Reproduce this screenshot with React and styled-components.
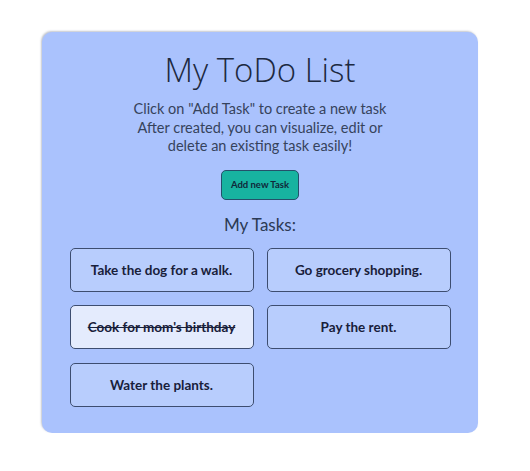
import React from "react";
import styled, { createGlobalStyle } from "styled-components";

const GlobalStyle = createGlobalStyle`
  body {
    margin: 0;
    background: #ffffff;
    font-family: Lato, "Open Sans", sans-serif;
  }
`;

const tasks = [
  { id: 1, text: "Take the dog for a walk.", done: false },
  { id: 2, text: "Go grocery shopping.", done: false },
  { id: 3, text: "Cook for mom's birthday", done: true },
  { id: 4, text: "Pay the rent.", done: false },
  { id: 5, text: "Water the plants.", done: false },
];

const App = () => {
  return (
    <Page>
      <GlobalStyle />
      <Card>
        <Title>My ToDo List</Title>
        <Intro>
          Click on "Add Task" to create a new task
          <br />
          After created, you can visualize, edit or
          <br />
          delete an existing task easily!
        </Intro>
        <AddButton>Add new Task</AddButton>
        <SubTitle>My Tasks:</SubTitle>
        <Grid>
          {tasks.map((t) => (
            <Task key={t.id} done={t.done}>
              {t.text}
            </Task>
          ))}
        </Grid>
      </Card>
    </Page>
  );
};

export default App;

const Page = styled.div`
  padding: 32px 0 0 42px;
`;

const Card = styled.div`
  width: 436px;
  height: 401px;
  box-sizing: border-box;
  background: #aac2fd;
  border-radius: 10px;
  box-shadow: -1px -1px 2px rgba(80, 90, 110, 0.35);
  display: flex;
  flex-direction: column;
  align-items: center;
  padding-top: 16px;
`;

const Title = styled.h1`
  margin: 0;
  font-family: "Open Sans", sans-serif;
  font-size: 33px;
  font-weight: 300;
  line-height: 44px;
  color: #1c2940;
`;

const Intro = styled.p`
  margin: 8px 0 0;
  font-size: 14.5px;
  line-height: 18.5px;
  text-align: center;
  color: #36435c;
`;

const AddButton = styled.button`
  margin-top: 14px;
  width: 78px;
  height: 30px;
  padding: 0;
  background: #17b3a0;
  border: 1px solid #24506a;
  border-radius: 5px;
  font-family: Lato, sans-serif;
  font-size: 9.5px;
  font-weight: 700;
  color: #10283a;
`;

const SubTitle = styled.h2`
  margin: 14px 0 0;
  font-size: 17px;
  font-weight: 400;
  line-height: 22px;
  color: #2c3a55;
`;

const Grid = styled.div`
  margin-top: 12px;
  display: grid;
  grid-template-columns: 184px 184px;
  grid-auto-rows: 44px;
  column-gap: 13px;
  row-gap: 13.5px;
`;

const Task = styled.div`
  display: flex;
  align-items: center;
  justify-content: center;
  box-sizing: border-box;
  border: 1px solid #3d4d70;
  border-radius: 5px;
  background: ${(p) => (p.done ? "#e4ebfd" : "#b8cdfd")};
  font-size: 13.5px;
  font-weight: 700;
  color: #18203a;
  text-decoration: ${(p) => (p.done ? "line-through" : "none")};
`;
